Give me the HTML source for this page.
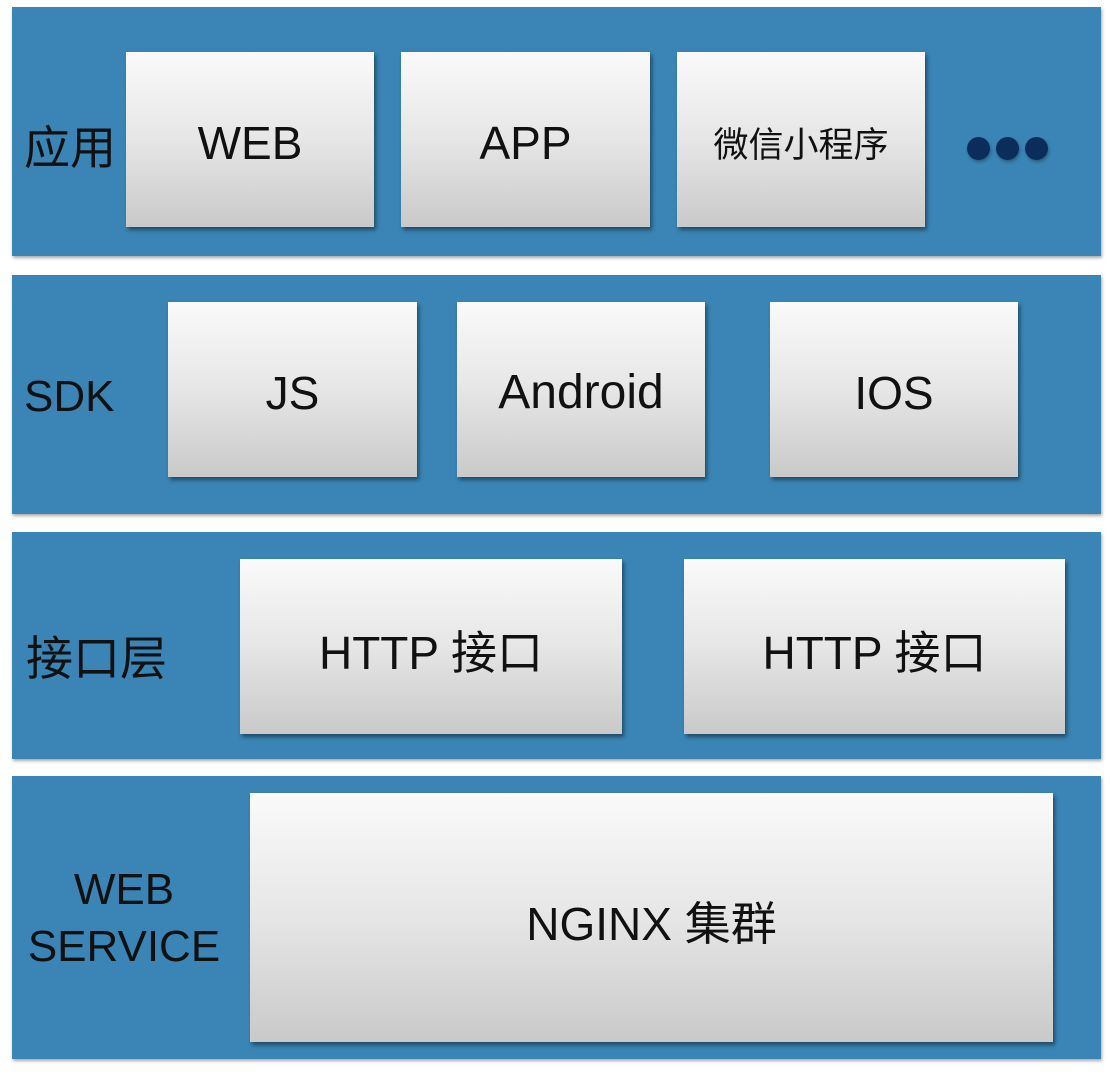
<!DOCTYPE html>
<html><head><meta charset="utf-8"><style>
html,body{margin:0;padding:0;background:#fff;}
body{width:1110px;height:1078px;position:relative;overflow:hidden;font-family:"Liberation Sans","Noto Sans CJK SC",sans-serif;color:#111;}
.p{position:absolute;left:12px;width:1089px;background:#3a85b6;box-shadow:1px 2px 3px rgba(0,0,0,.35);}
.b{position:absolute;box-sizing:border-box;padding-top:6px;background:linear-gradient(#fafafa,#e6e6e6 50%,#c9c9c9);box-shadow:2px 3px 4px rgba(0,0,0,.45);display:flex;align-items:center;justify-content:center;font-size:46px;}
.l{position:absolute;font-size:44px;line-height:57px;}
.d{position:absolute;top:137px;width:23px;height:23px;border-radius:50%;background:#0a2d5c;box-shadow:1px 2px 3px rgba(0,0,0,.3);}
</style></head><body>
<div class="p" style="top:7px;height:249px"></div>
<div class="p" style="top:275px;height:239px"></div>
<div class="p" style="top:532px;height:227px"></div>
<div class="p" style="top:776px;height:283px"></div>

<div class="l" style="left:24px;top:120px;font-size:46px">应用</div>
<div class="b" style="left:126px;top:52px;width:248px;height:175px">WEB</div>
<div class="b" style="left:401px;top:52px;width:249px;height:175px">APP</div>
<div class="b" style="left:677px;top:52px;width:248px;height:175px;font-size:35px">微信小程序</div>
<div class="d" style="left:967px"></div>
<div class="d" style="left:996px"></div>
<div class="d" style="left:1025px"></div>

<div class="l" style="left:24px;top:368px">SDK</div>
<div class="b" style="left:168px;top:302px;width:249px;height:175px">JS</div>
<div class="b" style="left:457px;top:302px;width:248px;height:175px;font-size:48px">Android</div>
<div class="b" style="left:770px;top:302px;width:248px;height:175px">IOS</div>

<div class="l" style="left:26px;top:630px;font-size:47px">接口层</div>
<div class="b" style="left:240px;top:559px;width:382px;height:175px">HTTP 接口</div>
<div class="b" style="left:684px;top:559px;width:381px;height:175px">HTTP 接口</div>

<div class="l" style="left:24px;top:861px;width:200px;text-align:center">WEB<br>SERVICE</div>
<div class="b" style="left:250px;top:793px;width:803px;height:249px">NGINX 集群</div>
</body></html>
